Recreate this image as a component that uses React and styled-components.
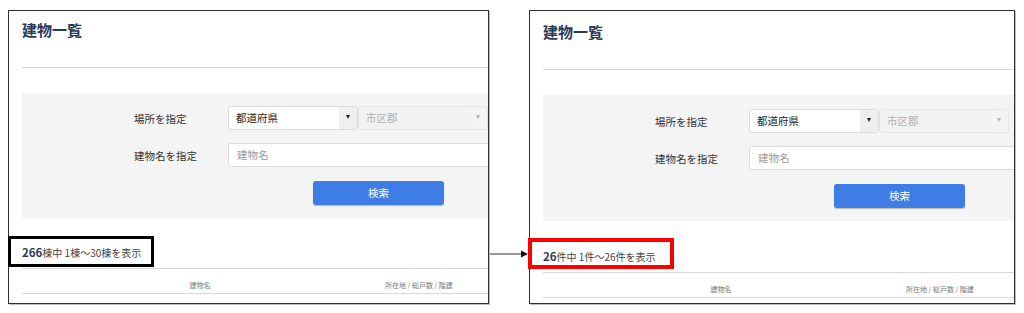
import React from "react";
import styled, { createGlobalStyle } from "styled-components";

const Global = createGlobalStyle`
  html, body { margin: 0; padding: 0; background: #fff; }
  body { font-family: "Noto Sans CJK JP", "Noto Sans", sans-serif; }
  * { box-sizing: border-box; }
`;

const Stage = styled.div`
  display: flex;
  align-items: flex-start;
  padding: 10px 0 0 8px;
  height: 313px;
`;

const PanelWrap = styled.div`
  position: relative;
  width: ${(p) => p.$w}px;
  height: 294px;
  flex: none;
`;

const Frame = styled.div`
  width: 100%;
  height: 100%;
  border: 1px solid #2f2f2f;
  box-shadow: 1px 1px 0 #bdbdbd;
  overflow: hidden;
  background: #fff;
`;

const Page = styled.div`
  width: 640px;
  padding: ${(p) => 9 + p.$shift}px 0 0 13px;
`;

const Title = styled.h1`
  margin: 0;
  font-size: 15px;
  line-height: 20px;
  font-weight: 700;
  color: #2b3a57;
`;

const Divider = styled.div`
  height: 1px;
  background: #d9d9d9;
  margin-top: ${(p) => p.$mt}px;
`;

const SearchArea = styled.div`
  margin-top: 25px;
  background: #f4f4f4;
  padding: ${(p) => 13 + p.$extra}px 0 13px 112px;
  display: flex;
  flex-direction: column;
  gap: 13px;
`;

const FormRow = styled.div`
  display: flex;
  align-items: center;
  height: 24px;
`;

const Label = styled.div`
  width: 94px;
  font-size: 10.5px;
  color: #333;
  flex: none;
`;

const SelectBox = styled.div`
  width: 130px;
  height: 24px;
  display: flex;
  border: 1px solid ${(p) => (p.$disabled ? "#e6e6e6" : "#dcdcdc")};
  border-radius: 3px;
  background: ${(p) => (p.$disabled ? "#f2f2f2" : "#fff")};
  overflow: hidden;
  flex: none;
`;

const SelectText = styled.div`
  flex: 1;
  padding-left: 7px;
  font-size: 10.5px;
  line-height: 22px;
  color: ${(p) => (p.$disabled ? "#b0b0b0" : "#222")};
`;

const SelectArrow = styled.div`
  width: 18px;
  background: ${(p) => (p.$disabled ? "#f4f4f4" : "#efefef")};
  display: flex;
  align-items: center;
  justify-content: center;
  &::after {
    content: "";
    width: 0;
    height: 0;
    border-left: 2.5px solid transparent;
    border-right: 2.5px solid transparent;
    border-top: 4px solid ${(p) => (p.$disabled ? "#b5b5b5" : "#222")};
    margin-top: -3px;
  }
`;

const TextInput = styled.div`
  width: 400px;
  height: 24px;
  border: 1px solid #dcdcdc;
  border-radius: 3px;
  background: #fff;
  padding-left: 8px;
  font-size: 10.5px;
  line-height: 22px;
  color: #9a9a9a;
`;

const ButtonRow = styled.div`
  display: flex;
  height: 24px;
  margin-top: 1px;
  padding-left: 179px;
`;

const SearchButton = styled.div`
  width: 131px;
  height: 24px;
  border-radius: 3px;
  background: #3f7de6;
  box-shadow: 0 1px 1px rgba(0, 0, 0, 0.25);
  color: #fff;
  font-size: 10.5px;
  line-height: 24px;
  text-align: center;
`;

const Count = styled.div`
  margin-top: ${(p) => 26 + p.$extra}px;
  height: 16px;
  font-size: 10px;
  line-height: 16px;
  color: #444;
  white-space: nowrap;
`;

const CountNum = styled.b`
  font-size: 11.5px;
  font-weight: 700;
  color: #2b3a57;
`;

const TableHead = styled.div`
  display: grid;
  grid-template-columns: 356px 1fr;
  padding: 10px 0 2px;
  font-size: 7px;
  line-height: 12px;
  color: #777;
`;

const HeadCell = styled.div`
  text-align: ${(p) => p.$align};
  padding-left: ${(p) => p.$pl || 0}px;
`;

const Highlight = styled.div`
  position: absolute;
  left: ${(p) => p.$left}px;
  top: ${(p) => p.$top}px;
  width: 146px;
  height: 31px;
  border: ${(p) => p.$bw}px solid ${(p) => p.$color};
`;

const Connector = styled.svg`
  flex: none;
  width: 40px;
  height: 10px;
  margin-top: 239px;
`;

function ListPanel({ width, shift, extra, total, unit, last, hl }) {
  return (
    <PanelWrap $w={width}>
      <Frame>
        <Page $shift={shift}>
          <Title>建物一覧</Title>
          <Divider $mt={27} />
          <SearchArea $extra={extra}>
            <FormRow>
              <Label>場所を指定</Label>
              <SelectBox>
                <SelectText>都道府県</SelectText>
                <SelectArrow />
              </SelectBox>
              <SelectBox $disabled>
                <SelectText $disabled>市区郡</SelectText>
                <SelectArrow $disabled />
              </SelectBox>
            </FormRow>
            <FormRow>
              <Label>建物名を指定</Label>
              <TextInput>建物名</TextInput>
            </FormRow>
            <ButtonRow>
              <SearchButton>検索</SearchButton>
            </ButtonRow>
          </SearchArea>
          <Count $extra={extra}>
            <CountNum>{total}</CountNum>
            {unit}中 1{unit}〜{last}{unit}を表示
          </Count>
          <Divider $mt={8} />
          <TableHead>
            <HeadCell $align="center">建物名</HeadCell>
            <HeadCell $align="left" $pl={7}>
              所在地 / 総戸数 / 階建
            </HeadCell>
          </TableHead>
          <Divider $mt={0} />
        </Page>
      </Frame>
      <Highlight $left={hl.left} $top={hl.top} $color={hl.color} $bw={hl.bw} />
    </PanelWrap>
  );
}

export default function App() {
  return (
    <>
      <Global />
      <Stage>
        <ListPanel
          width={481}
          shift={0}
          extra={0}
          total="266"
          unit="棟"
          last="30"
          hl={{ left: 0, top: 226, color: "#000", bw: 3 }}
        />
        <Connector viewBox="0 0 40 10">
          <line x1="0" y1="5" x2="33" y2="5" stroke="#333" strokeWidth="1" />
          <polygon points="32,1.5 39,5 32,8.5" fill="#111" />
        </Connector>
        <ListPanel
          width={486}
          shift={2}
          extra={1}
          total="26"
          unit="件"
          last="26"
          hl={{ left: -1, top: 228, color: "#ff0000", bw: 4 }}
        />
      </Stage>
    </>
  );
}
